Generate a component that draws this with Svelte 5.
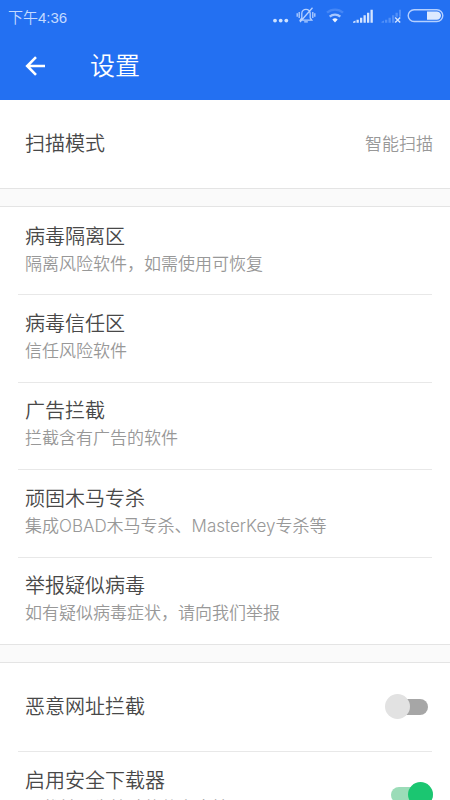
<script>
  const tools = [
    { title: '病毒隔离区', note: '隔离风险软件，如需使用可恢复' },
    { title: '病毒信任区', note: '信任风险软件' },
    { title: '广告拦截', note: '拦截含有广告的软件' },
    { title: '顽固木马专杀', note: '集成OBAD木马专杀、MasterKey专杀等' },
    { title: '举报疑似病毒', note: '如有疑似病毒症状，请向我们举报' }
  ];
  let blockUrls = $state(false);
  let safeDownloads = $state(true);
</script>

<div class="screen">
  <header>
    <div class="status">
      <span class="time">下午4:36</span>
      <svg class="indicators" width="174" height="20" viewBox="0 0 174 20" aria-hidden="true">
        <g fill="#cfe2ff">
          <circle cx="4" cy="14.6" r="1.9" /><circle cx="9.700" cy="14.6" r="1.9" /><circle cx="15.300" cy="14.6" r="1.9" />
        </g>
        <g fill="none" stroke="#b5d0ff" stroke-width="1.3">
          <path d="M29.200 14.200h11.600l-1.600-2.200V7.500a4.200 4.200 0 0 0-8.400 0v4.500zM33.200 15.800h3.600M41.500 1.800L29 16M28.200 6v6M41.800 6v6M26.200 7.200v3.600M43.800 7.200v3.600" />
        </g>
        <g fill="none" stroke-width="2.4">
          <path d="M56 6.700a12 12 0 0 1 16 0" stroke="#4486f6" />
          <path d="M58.700 10.600a8.200 8.200 0 0 1 10.600 0" stroke="#a5c6ff" />
        </g>
        <path d="M64 16.600l-2.700-3.200a4 4 0 0 1 5.400 0z" fill="#edf4ff" />
        <path fill="#d5e5ff" d="M82 16.800v-1l2.500-1.300v2.300zM85.500 13.800h2.300v3h-2.300zM89 11.800h2.300v5h-2.300zM92.500 9.300h2.300v7.500h-2.300zM96 6.800h2.300v10h-2.300zM99.500 3.800h2.300v13h-2.300z" />
        <path fill="#5290f8" d="M110.500 16.800v-1l2.500-1.300v2.300zM114 13.800h2.300v3h-2.300zM117.500 11.800h2.300v5h-2.300zM121 9.300h2.300v7.500h-2.300zM124.500 6.800h2.300v4h-2.300zM128 3.800h2v7h-2z" />
        <path d="M124.200 11.500l5 5m0-5l-5 5" stroke="#d5e5ff" stroke-width="1.4" />
        <rect x="137.200" y="3.700" width="34.600" height="11.800" rx="5.900" fill="none" stroke="#b5d0ff" stroke-width="1.4" />
        <path d="M156 5.400h9.800a4.200 4.200 0 0 1 0 8.400H156z" fill="#dce9ff" />
      </svg>
    </div>
    <div class="bar">
      <button class="back" aria-label="返回">
        <svg width="22" height="22" viewBox="0 0 22 22" aria-hidden="true">
          <path d="M21 11H3.500M12 2.200L3.200 11l8.800 8.800" fill="none" stroke="#fff" stroke-width="2.6" />
        </svg>
      </button>
      <h1>设置</h1>
    </div>
  </header>

  <main>
    <section>
      <button class="row mode">
        <span class="title">扫描模式</span>
        <span class="note">智能扫描</span>
      </button>
    </section>

    <section class="tools">
      {#each tools as tool}
        <button class="row">
          <span class="words">
            <span class="title">{tool.title}</span>
            <span class="note">{tool.note}</span>
          </span>
        </button>
      {/each}
    </section>

    <section>
      <label class="row">
        <span class="title">恶意网址拦截</span>
        <input type="checkbox" role="switch" bind:checked={blockUrls} />
      </label>
      <label class="row">
        <span class="words">
          <span class="title">启用安全下载器</span>
          <span class="note">下载前预先检验软件安全性</span>
        </span>
        <input type="checkbox" role="switch" bind:checked={safeDownloads} />
      </label>
    </section>
  </main>
</div>

<style>
  :global(body) {
    margin: 0;
    background: #fafafa;
  }
  .screen {
    height: 100vh;
    overflow: hidden;
    font-family: Inter, 'Noto Sans CJK SC', sans-serif;
    font-weight: 350;
    color: #484848;
  }
  header {
    background: #2370f2;
    color: #fff;
  }
  .status {
    display: flex;
    align-items: center;
    justify-content: space-between;
    height: 32px;
    padding: 0 5px 0 8px;
  }
  .time {
    font-family: 'Liberation Sans', 'Noto Sans CJK SC', sans-serif;
    font-size: 15px;
    color: #c3daff;
  }
  .bar {
    display: flex;
    align-items: center;
    height: 68px;
    padding: 0 24px;
    gap: 44px;
  }
  .back {
    display: flex;
    padding: 0;
    border: 0;
    background: none;
  }
  h1 {
    margin: 0;
    font-size: 25px;
    font-weight: 350;
    line-height: 32px;
  }
  main {
    display: flex;
    flex-direction: column;
    gap: 17px;
  }
  section {
    background: #fff;
    border-bottom: 1px solid #e4e4e4;
  }
  section + section {
    border-top: 1px solid #e4e4e4;
  }
  .tools {
    display: grid;
    grid-auto-rows: 1fr;
    min-height: 437px;
  }
  .row {
    position: relative;
    display: flex;
    box-sizing: border-box;
    align-items: center;
    justify-content: space-between;
    width: 100%;
    min-height: 88px;
    padding: 0 17px 0 25px;
    border: 0;
    background: none;
    font: inherit;
    color: inherit;
    text-align: left;
  }
  .tools .row {
    min-height: 87px;
  }
  .row + .row::before {
    content: '';
    position: absolute;
    top: 0;
    left: 18px;
    right: 18px;
    border-top: 1px solid #e8e8e8;
  }
  .words {
    display: flex;
    flex-direction: column;
    padding-bottom: 2px;
  }
  .title {
    font-size: 20px;
    line-height: 28px;
  }
  .note {
    font-size: 17px;
    line-height: 26px;
    color: #989898;
  }
  input {
    appearance: none;
    position: relative;
    width: 39px;
    height: 16px;
    margin: 0 5px;
    border-radius: 8px;
    background: linear-gradient(#a6a6a6, #a6a6a6) right / 30px 100% no-repeat;
  }
  input::before {
    content: '';
    position: absolute;
    top: -5px;
    left: -4px;
    width: 25px;
    height: 25px;
    border-radius: 50%;
    background: #e2e2e2;
  }
  input:checked {
    width: 42px;
    margin-right: 0;
    background: #9bdcb8;
  }
  input:checked::before {
    left: auto;
    right: 0;
    background: #1bc671;
  }
</style>
